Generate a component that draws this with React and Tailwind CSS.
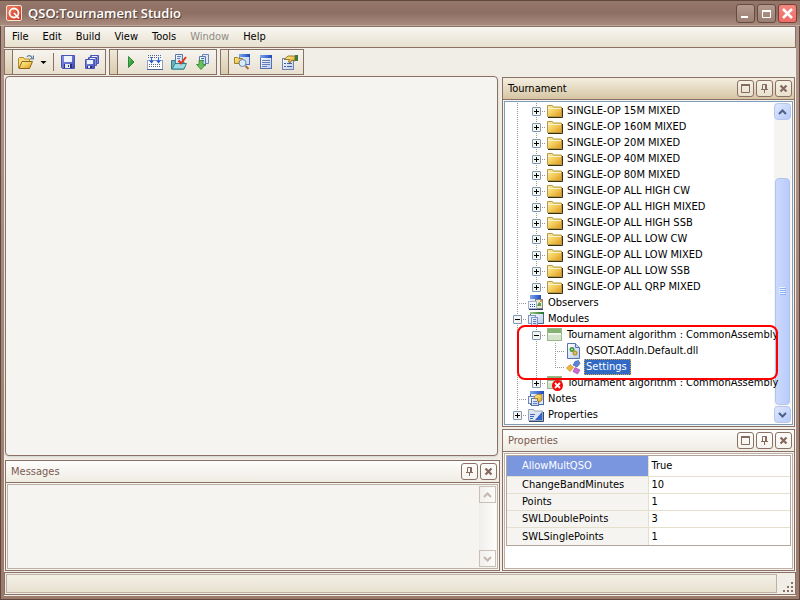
import React from "react";
import clsx from "clsx";

const folders = [
  "SINGLE-OP 15M MIXED",
  "SINGLE-OP 160M MIXED",
  "SINGLE-OP 20M MIXED",
  "SINGLE-OP 40M MIXED",
  "SINGLE-OP 80M MIXED",
  "SINGLE-OP ALL HIGH CW",
  "SINGLE-OP ALL HIGH MIXED",
  "SINGLE-OP ALL HIGH SSB",
  "SINGLE-OP ALL LOW CW",
  "SINGLE-OP ALL LOW MIXED",
  "SINGLE-OP ALL LOW SSB",
  "SINGLE-OP ALL QRP MIXED",
];

const properties = [
  { name: "AllowMultQSO", value: "True" },
  { name: "ChangeBandMinutes", value: "10" },
  { name: "Points", value: "1" },
  { name: "SWLDoublePoints", value: "3" },
  { name: "SWLSinglePoints", value: "1" },
];

const menus = ["File", "Edit", "Build", "View", "Tools", "Window", "Help"];

/* shared gradients for all small icons */
const IconDefs = () => (
  <svg className="absolute size-0" aria-hidden="true">
    <defs>
      <linearGradient id="gold" x1="0" y1="0" x2="1" y2="1">
        <stop offset="0" stopColor="#fdf0a8" />
        <stop offset="0.5" stopColor="#f3cc5c" />
        <stop offset="1" stopColor="#dc9818" />
      </linearGradient>
      <linearGradient id="disk" x1="0" y1="0" x2="1" y2="1">
        <stop offset="0" stopColor="#8c98ea" />
        <stop offset="1" stopColor="#3f49b8" />
      </linearGradient>
      <linearGradient id="blueBar" x1="0" y1="0" x2="1" y2="0">
        <stop offset="0" stopColor="#7ea6ee" />
        <stop offset="1" stopColor="#1d49b8" />
      </linearGradient>
      <linearGradient id="greenBar" x1="0" y1="0" x2="1" y2="0">
        <stop offset="0" stopColor="#9ccf8c" />
        <stop offset="1" stopColor="#1f6f28" />
      </linearGradient>
      <linearGradient id="paper" x1="0" y1="0" x2="1" y2="1">
        <stop offset="0" stopColor="#ffffff" />
        <stop offset="1" stopColor="#b9cbea" />
      </linearGradient>
      <linearGradient id="logo" x1="0" y1="0" x2="1" y2="1">
        <stop offset="0" stopColor="#f08060" />
        <stop offset="1" stopColor="#c8321c" />
      </linearGradient>
      <linearGradient id="green" x1="0" y1="0" x2="1" y2="1">
        <stop offset="0" stopColor="#6fd06a" />
        <stop offset="1" stopColor="#0c7a1a" />
      </linearGradient>
    </defs>
  </svg>
);

const Icon = ({ children }) => (
  <svg viewBox="0 0 16 16" className="size-4 shrink-0" aria-hidden="true">
    {children}
  </svg>
);

const OpenIcon = () => (
  <Icon>
    <path d="M.5 14V4.500l1-1h4l1 1.500h5V8" fill="#f7dc7c" stroke="#b3892a" />
    <path d="M1 14.500 4 7.500h10.500l-3 7z" fill="url(#gold)" stroke="#8c6718" />
    <path d="M9 3c1-2 4-2 5 1M15.400 1.500v3.300h-3.300" fill="none" stroke="#5f7f9f" strokeWidth="1.2" />
  </Icon>
);

const SaveIcon = () => (
  <Icon>
    <path d="M1.500 1.500h13v13h-12l-1-1z" fill="url(#disk)" stroke="#4a54b4" />
    <rect x="4" y="2" width="8" height="6" fill="#eef2fd" />
    <rect x="4" y="10" width="8" height="4" fill="#27306e" />
    <rect x="5" y="10" width="5" height="4" fill="#e4e9f8" />
    <rect x="8" y="11" width="1" height="2" fill="#2b3580" />
  </Icon>
);

const SaveAllIcon = () => (
  <Icon>
    <path d="M6.500 1.500h8v8h-8z" fill="#8390dc" stroke="#4a54b4" />
    <rect x="8" y="2" width="5" height="1" fill="#eef2fd" />
    <path d="M4.500 3.500h8v8h-8z" fill="#8390dc" stroke="#4a54b4" />
    <rect x="6" y="4" width="5" height="1" fill="#eef2fd" />
    <path d="M1.500 5.500h9v9h-9z" fill="url(#disk)" stroke="#4a54b4" />
    <rect x="3" y="6" width="6" height="4" fill="#eef2fd" />
    <rect x="3" y="12" width="5" height="2" fill="#27306e" />
    <rect x="4" y="12" width="2" height="2" fill="#e4e9f8" />
  </Icon>
);

const RunIcon = () => (
  <Icon>
    <path d="M5.500 2.500 11 8l-5.500 5.500z" fill="url(#green)" stroke="#15741c" strokeWidth="0.8" />
  </Icon>
);

const BuildIcon = () => (
  <Icon>
    <rect x="0" y="0" width="16" height="7" fill="#f3f3f3" />
    <path d="M1 1.500h14M1 3.500h14" stroke="#5a6478" strokeDasharray="1 1" />
    <rect x="0.500" y="6.500" width="15" height="9" fill="#ffffff" stroke="#8fa2c8" />
    <path d="M2 10.500h12M2 12.500h12" stroke="#5a6478" strokeDasharray="1 1" />
    <path d="M0 15.500h16" stroke="#4e6492" />
    <path d="M4.500 3v4M11.500 3v4" stroke="#3a72e8" />
    <path d="M2 6.500h5L4.500 9.500zM9 6.500h5l-2.500 3z" fill="#2456d0" />
  </Icon>
);

const CheckIcon = () => (
  <Icon>
    <path d="M0.500 15V6.500h4L6 8h7v7z" fill="#64b3bd" stroke="#2f7f8c" />
    <path d="M4.500.500h7v9h-7z" fill="url(#paper)" stroke="#5b76a8" />
    <path d="M6 2.500h4M6 4.500h3" stroke="#5b82c8" />
    <path d="m1 15 3-5.500h11.500L13 15z" fill="#9edbe0" stroke="#2f7f8c" />
    <path d="m7.500 6.500 2.500 3 5-6.500" fill="none" stroke="#e0341c" strokeWidth="2" />
  </Icon>
);

const ExportIcon = () => (
  <Icon>
    <path d="M7.500.500h6v9h-6z" fill="#dfe8f8" stroke="#6d86b6" />
    <path d="M4.500 2.500h6v9h-6z" fill="url(#paper)" stroke="#5b76a8" />
    <path d="M6 4.500h3M8 6.500h1" stroke="#3f66b8" />
    <path d="M4 6.500h4v4h2.500L6 15.500l-4.500-5H4z" fill="#6cc05c" stroke="#2d8229" strokeWidth="0.8" />
  </Icon>
);

const FindIcon = () => (
  <Icon>
    <rect x="5.500" y=".500" width="10" height="10" fill="#cfe0fb" stroke="#4a74cc" />
    <rect x="5" y="0" width="11" height="3" fill="url(#blueBar)" />
    <path d="M.500 9.500v-6h3l1 1h4v5z" fill="url(#gold)" stroke="#a8801c" />
    <circle cx="8.500" cy="9" r="3.500" fill="#d9ecfb" stroke="#6c86a6" />
    <path d="m11.500 12 3 3" stroke="#a86b3a" strokeWidth="2" />
  </Icon>
);

const ListIcon = () => (
  <Icon>
    <rect x="2.500" y="1.500" width="11" height="13" fill="url(#paper)" stroke="#5470b0" />
    <rect x="2" y="1" width="12" height="3" fill="url(#blueBar)" />
    <path d="M4 6.500h8M4 8.500h8M4 10.500h8M4 12.500h5" stroke="#6680b4" />
  </Icon>
);

const PropsIcon = () => (
  <Icon>
    <rect x=".500" y="4.500" width="11" height="11" fill="url(#paper)" stroke="#6c86b0" />
    <path d="M2 9.500h2M5 9.500h5M2 12.500h2M5 12.500h5" stroke="#44609c" />
    <path d="M2 5.500 6 2h7v5l-3-1-2 3-1.500-1 1-2.500z" fill="url(#gold)" stroke="#7d5b12" strokeWidth="0.8" />
    <rect x="13" y="1" width="3" height="6" fill="#3d7a3c" />
  </Icon>
);

const FolderIcon = () => (
  <Icon>
    <path d="M1 14.500h14.500V5" fill="none" stroke="#3a2c08" />
    <path d="M.500 13.500v-11h5l1 1.500h8v9.500z" fill="url(#gold)" stroke="#b9994c" />
    <path d="M1 5.500h13" stroke="#fdf4c4" />
  </Icon>
);

const ObserversIcon = () => (
  <Icon>
    <rect x="2" y="0" width="11" height="10" fill="#dfe9fb" />
    <rect x="2" y="0" width="11" height="4" fill="url(#blueBar)" />
    <rect x="7.500" y="4.500" width="7" height="9" fill="#f1e6c8" stroke="#7a8494" />
    <path d="m9 11 2-4 2 1.500V11z" fill="#4fa04a" />
    <rect x="12" y="5" width="2" height="2" fill="#e39b2f" />
    <rect x=".500" y="6.500" width="8" height="7" fill="#f4f7fd" stroke="#a4b2cc" />
    <path d="M2 9.500h6M2 11.500h6" stroke="#2a4fa8" strokeDasharray="1 1" />
    <path d="M1 14.500h14" stroke="#2a3c66" />
  </Icon>
);

const ModulesIcon = () => (
  <Icon>
    <rect x="2.500" y="1.500" width="13" height="11" fill="url(#paper)" stroke="#4e6a80" />
    <rect x="2" y="1" width="14" height="2" fill="url(#greenBar)" />
    <rect x=".500" y="4.500" width="7" height="8" fill="#eaf0fb" stroke="#7f96c2" />
    <rect x="3.500" y="6.500" width="6" height="8" fill="url(#paper)" stroke="#7f96c2" />
    <path d="M5 8.500h3M5 10.500h3M5 12.500h3" stroke="#5b82c8" />
  </Icon>
);

const AlgorithmIcon = ({ failed }) => (
  <Icon>
    <rect x=".500" y="1.500" width="14" height="12" fill="#eef5e8" stroke="#9ab68c" />
    <rect x="1" y="2" width="13" height="4" fill="#86b276" />
    <rect x="1" y="8" width="13" height="5" fill="#d3e4cb" />
    {failed && (
      <g>
        <circle cx="10.500" cy="10.500" r="5.500" fill="#f80808" />
        <path d="m8 8 5 5M13 8l-5 5" stroke="#ffffff" strokeWidth="1.8" />
      </g>
    )}
  </Icon>
);

const DllIcon = () => (
  <Icon>
    <path d="M1.500.500h8l4 4v11h-12z" fill="url(#paper)" stroke="#5873aa" />
    <path d="M9.500.500v4h4" fill="#c6d8f4" stroke="#5873aa" />
    <circle cx="6" cy="6.500" r="2.500" fill="#3f9c3a" />
    <circle cx="6" cy="6.500" r=".8" fill="#e6f4e4" />
    <circle cx="9" cy="10" r="2.500" fill="#b9962c" />
    <circle cx="9" cy="10" r=".8" fill="#fbf3d6" />
  </Icon>
);

const SettingsIcon = () => (
  <Icon>
    <path d="m9 2.500 3.500-1 1.500 3-3 3.500-4-2z" fill="#5f88d8" stroke="#2d4f9e" strokeWidth="0.6" />
    <path d="m4 5.500 3.500 3L4 12.500.500 9z" fill="#f0b63a" stroke="#b07d18" strokeWidth="0.6" />
    <path d="m9 8.500 5 2.500-2.500 4-4.500-2.500z" fill="#cc6ad8" stroke="#93419e" strokeWidth="0.6" />
  </Icon>
);

const NotesIcon = () => (
  <Icon>
    <rect x="2.500" y=".500" width="13" height="13" fill="#dfe9fb" stroke="#4a68a8" />
    <rect x="2" y="0" width="14" height="3" fill="url(#blueBar)" />
    <rect x=".500" y="5.500" width="7" height="7" fill="#eaf0fb" stroke="#6d86b6" />
    <rect x="3.500" y="7.500" width="7" height="7" fill="url(#paper)" stroke="#5873aa" />
    <path d="M5 10.500h4M5 12.500h4" stroke="#5b82c8" />
    <path d="m6 6 3-2.500h5V9l-2.500 2-2-1V7.500L7 8z" fill="url(#gold)" stroke="#8a6414" strokeWidth="0.7" />
  </Icon>
);

const PropFolderIcon = () => (
  <Icon>
    <path d="M.500 13.500v-11h5l1 1.500h8v9.500z" fill="#dfe5ee" stroke="#9aa6b8" />
    <path d="M2 7.500h5M2 9.500h4M2 11.500h3" stroke="#3a68c8" />
    <path d="M14 5v8H7z" fill="#3163cc" />
    <path d="M1 14.500h14.500V5" fill="none" stroke="#33466e" />
  </Icon>
);

/* one 19x16 cell of the tree gutter */
const Gutter = ({ up, down, across, box }) => (
  <svg viewBox="0 0 19 16" className="h-4 w-[19px] shrink-0" aria-hidden="true">
    {up && <path d="M9.500 0v8" stroke="#9d998f" strokeDasharray="1 1" />}
    {down && <path d="M9.500 8v8" stroke="#9d998f" strokeDasharray="1 1" />}
    {across && <path d="M9 8.500h10" stroke="#9d998f" strokeDasharray="1 1" />}
    {box && (
      <g>
        <rect x="5.500" y="4.500" width="8" height="8" rx=".500" fill="#f6f4ef" stroke="#7b97b5" />
        <path d="M7 8.500h5" stroke="#000000" />
        {box === "plus" && <path d="M9.500 6v5" stroke="#000000" />}
      </g>
    )}
  </svg>
);

const line = { up: true, down: true };
const tee = { up: true, down: true, across: true };
const end = { up: true, across: true };

const TreeRow = ({ gutters, icon, label, selected }) => (
  <li className="flex h-4 items-center whitespace-nowrap">
    {gutters.map((g, i) => (
      <Gutter key={i} {...g} />
    ))}
    <span className="ml-px flex">{icon}</span>
    <span
      className={clsx(
        "ml-0.5 h-4 px-0.5 leading-4",
        selected && "bg-[#316ac5] pr-1 text-white outline-1 -outline-offset-1 outline-dotted outline-[#e0a040]"
      )}
    >
      {label}
    </span>
  </li>
);

const MaximizeGlyph = () => (
  <svg viewBox="0 0 9 9" className="size-[9px]" aria-hidden="true">
    <path d="M.500 1v7.500h8V1" fill="none" stroke="currentColor" />
    <path d="M0 1h9" stroke="currentColor" strokeWidth="2" />
  </svg>
);

const PinGlyph = () => (
  <svg viewBox="0 0 9 9" className="size-[9px]" aria-hidden="true">
    <path d="M2.500 5V.500h4V5M1 5.500h7M4.500 6v3M5.500 0v5" fill="none" stroke="currentColor" />
  </svg>
);

const CloseGlyph = () => (
  <svg viewBox="0 0 9 9" className="size-[9px]" aria-hidden="true">
    <path d="m1.500 1.500 6 6M7.500 1.500l-6 6" stroke="currentColor" strokeWidth="2.200" />
  </svg>
);

const PanelButton = ({ label, children }) => (
  <button
    aria-label={label}
    className="flex size-[17px] items-center justify-center rounded-[3px] border border-[#8b7065] bg-white/40 text-[#866a5e]"
  >
    {children}
  </button>
);

const Panel = ({ title, active, maximize, className, children }) => (
  <section className={clsx("flex flex-col border border-[#8b7065] bg-[#f6f4f0]", className)}>
    <header
      className={clsx(
        "flex h-[22px] shrink-0 items-center gap-0.5 border-b border-[#8b7065] bg-linear-to-b pr-0.5 pl-[5px]",
        active ? "from-[#f4efe2] to-[#d6c5a2] text-black" : "from-[#fdfdfc] to-[#efece3] text-[#7b5a50]"
      )}
    >
      <h2 className="flex-1 pt-0.5">{title}</h2>
      {maximize && (
        <PanelButton label="Maximize">
          <MaximizeGlyph />
        </PanelButton>
      )}
      <PanelButton label="Auto hide">
        <PinGlyph />
      </PanelButton>
      <PanelButton label="Close">
        <CloseGlyph />
      </PanelButton>
    </header>
    <div className="flex min-h-0 flex-1 p-px">{children}</div>
  </section>
);

const Chevron = ({ down }) => (
  <svg viewBox="0 0 9 6" className="h-1.5 w-[9px]" aria-hidden="true">
    <path
      d={down ? "m1 1 3.500 3.500L8 1" : "m1 5 3.500-3.500L8 5"}
      fill="none"
      stroke="currentColor"
      strokeWidth="2"
    />
  </svg>
);

const ToolButton = ({ label, children }) => (
  <button aria-label={label} className="flex h-6 w-6 items-center justify-center">
    {children}
  </button>
);

const ToolGroup = ({ children }) => (
  <div className="flex h-[26px] border border-[#8b7065] bg-linear-to-b from-[#f6f4ef] to-[#e9e1d0]">
    <div className="w-2 border-r border-[#8b7065] bg-linear-to-b from-[#efe9da] to-[#d9cbae]" />
    <div className="flex items-center px-px">{children}</div>
  </div>
);

const WindowButton = ({ label, close, children }) => (
  <button
    aria-label={label}
    className={clsx(
      "flex size-[19px] items-center justify-center rounded-[3px] border text-white",
      close
        ? "border-[#7c4038] bg-linear-to-b from-[#f08880] to-[#f06c66]"
        : "border-[#644c42] bg-linear-to-b from-[#b39a8d] to-[#9a7f72]"
    )}
  >
    {children}
  </button>
);

const TitleBar = () => (
  <header className="flex h-[26px] shrink-0 items-center border-t border-b border-t-[#5f473d] border-b-[#c0a79b] bg-linear-to-b from-[#947769] via-[#8d7063] to-[#a88b7d] pr-[3px] pl-1.5">
    <svg viewBox="0 0 16 16" className="size-4" aria-hidden="true">
      <rect x=".500" y=".500" width="15" height="15" rx="1.500" fill="url(#logo)" stroke="#fbe3da" />
      <circle cx="8" cy="8" r="4.500" fill="none" stroke="#ffffff" strokeWidth="1.8" />
      <path d="m8 8 5 5.500" stroke="#ffffff" strokeWidth="1.8" />
    </svg>
    <h1 className="flex-1 pl-1.5 font-['Open_Sans','Noto_Sans',sans-serif] text-[13px] leading-4 font-semibold text-white [text-shadow:1px_1px_0_#5a4238]">
      QSO:Tournament Studio
    </h1>
    <div className="flex gap-0.5">
      <WindowButton label="Minimize">
        <svg viewBox="0 0 11 11" className="size-[11px]" aria-hidden="true">
          <path d="M1 9h7" stroke="currentColor" strokeWidth="2" />
        </svg>
      </WindowButton>
      <WindowButton label="Maximize">
        <svg viewBox="0 0 11 11" className="size-[11px]" aria-hidden="true">
          <path d="M1.500 2v7.500h8V2" fill="none" stroke="currentColor" />
          <path d="M1 3h9" stroke="currentColor" strokeWidth="2" />
        </svg>
      </WindowButton>
      <WindowButton label="Close" close>
        <svg viewBox="0 0 11 11" className="size-[11px]" aria-hidden="true">
          <path d="m1 1 9 9M10 1l-9 9" stroke="currentColor" strokeWidth="2.500" />
        </svg>
      </WindowButton>
    </div>
  </header>
);

const ToolBar = () => (
  <div className="flex h-7 shrink-0 items-start gap-[3px] pt-px">
    <ToolGroup>
      <button aria-label="Open" className="flex h-6 items-center gap-1.5 pr-1.5 pl-1">
        <OpenIcon />
        <svg viewBox="0 0 7 3" className="h-[3px] w-[7px]" aria-hidden="true">
          <path d="M.500 0h6L3.500 3z" fill="#000000" />
        </svg>
      </button>
      <span className="mr-0.5 h-[18px] w-px bg-[#8b7065]" />
      <ToolButton label="Save">
        <SaveIcon />
      </ToolButton>
      <ToolButton label="Save all">
        <SaveAllIcon />
      </ToolButton>
    </ToolGroup>
    <ToolGroup>
      <ToolButton label="Run">
        <RunIcon />
      </ToolButton>
      <ToolButton label="Build">
        <BuildIcon />
      </ToolButton>
      <ToolButton label="Check">
        <CheckIcon />
      </ToolButton>
      <ToolButton label="Export">
        <ExportIcon />
      </ToolButton>
    </ToolGroup>
    <ToolGroup>
      <ToolButton label="Explorer">
        <FindIcon />
      </ToolButton>
      <ToolButton label="Messages">
        <ListIcon />
      </ToolButton>
      <ToolButton label="Properties">
        <PropsIcon />
      </ToolButton>
    </ToolGroup>
  </div>
);

const TreeScrollBar = () => (
  <div className="flex w-[17px] shrink-0 flex-col gap-px bg-[#f5f4f0]">
    <button
      aria-label="Scroll up"
      className="flex h-[17px] items-center justify-center rounded-sm border border-[#b6c6ee] bg-linear-to-br from-[#dfe8fe] to-[#b7cafa] text-[#4d6185]"
    >
      <Chevron />
    </button>
    <div className="flex min-h-0 flex-1 flex-col justify-end">
      <div className="mx-px flex h-4/5 items-center justify-center rounded-sm border border-[#b0c3f2] bg-linear-to-r from-[#cbdafd] to-[#b9cbf9]">
        <svg viewBox="0 0 7 8" className="h-2 w-[7px]" aria-hidden="true">
          <path d="M0 .500h6M0 2.500h6M0 4.500h6M0 6.500h6" stroke="#eef4fe" />
          <path d="M1 1.500h6M1 3.500h6M1 5.500h6M1 7.500h6" stroke="#8cb0f8" />
        </svg>
      </div>
    </div>
    <button
      aria-label="Scroll down"
      className="flex h-[17px] items-center justify-center rounded-sm border border-[#b6c6ee] bg-linear-to-br from-[#dfe8fe] to-[#b7cafa] text-[#4d6185]"
    >
      <Chevron down />
    </button>
  </div>
);

const TournamentTree = () => (
  <div className="flex min-w-0 flex-1 border border-[#7f9db9] bg-white p-px">
    <div className="z-10 min-w-0 flex-1 pl-0.5">
      <ul>
        {folders.map((name, i) => (
          <TreeRow
            key={name}
            gutters={[line, { ...(i === folders.length - 1 ? end : tee), box: "plus" }]}
            icon={<FolderIcon />}
            label={name}
          />
        ))}
        <TreeRow gutters={[tee]} icon={<ObserversIcon />} label="Observers" />
        <TreeRow gutters={[{ ...tee, box: "minus" }]} icon={<ModulesIcon />} label="Modules" />
      </ul>
      {/* highlighted branch */}
      <div className="relative">
        <ul>
          <TreeRow
            gutters={[line, { ...tee, box: "minus" }]}
            icon={<AlgorithmIcon />}
            label="Tournament algorithm : CommonAssembly"
          />
          <TreeRow gutters={[line, line, tee]} icon={<DllIcon />} label="QSOT.AddIn.Default.dll" />
          <TreeRow gutters={[line, line, end]} icon={<SettingsIcon />} label="Settings" selected />
        </ul>
        <div className="pointer-events-none absolute -top-0.5 -right-1 -bottom-[5px] left-[9px] z-10 rounded-lg border-2 border-[#ff0000]" />
      </div>
      <ul>
        <TreeRow
          gutters={[line, { ...end, box: "plus" }]}
          icon={<AlgorithmIcon failed />}
          label="Tournament algorithm : CommonAssembly"
        />
        <TreeRow gutters={[tee]} icon={<NotesIcon />} label="Notes" />
        <TreeRow gutters={[{ ...end, box: "plus" }]} icon={<PropFolderIcon />} label="Properties" />
      </ul>
    </div>
    <TreeScrollBar />
  </div>
);

const PropertyGrid = () => (
  <div className="min-w-0 flex-1 border border-[#bfb0a6] bg-white p-px">
    <div className="border border-[#b3a59b]">
      <table className="w-full table-fixed border-separate border-spacing-0 text-left">
        <tbody>
          {properties.map((p, i) => (
            <tr key={p.name} className="group">
              <th
                scope="row"
                className={clsx(
                  "w-1/2 border-r border-b border-[#e5dfce] p-0 pl-[15px] font-normal group-last:border-b-0",
                  i === 0 ? "h-5 bg-[#7a96df] leading-5 text-white" : "h-[17px] bg-[#f6f4f0] leading-4"
                )}
              >
                {p.name}
              </th>
              <td className="border-b border-[#e5dfce] p-0 pl-[3px] leading-4 group-last:border-b-0">
                {p.value}
              </td>
            </tr>
          ))}
        </tbody>
      </table>
    </div>
  </div>
);

const MessagesPane = () => (
  <div className="flex min-w-0 flex-1 border border-[#bfb0a6] p-px">
    <textarea readOnly aria-label="Messages" className="min-w-0 flex-1 resize-none outline-none" />
    <div className="flex w-[17px] shrink-0 flex-col justify-between bg-linear-to-r from-[#f0eeea] to-[#fdfdfc]">
      <button
        aria-label="Scroll up"
        disabled
        className="flex h-[17px] items-center justify-center border border-[#c9bfb7] text-[#c3b8b0]"
      >
        <Chevron />
      </button>
      <button
        aria-label="Scroll down"
        disabled
        className="flex h-[17px] items-center justify-center border border-[#c9bfb7] text-[#c3b8b0]"
      >
        <Chevron down />
      </button>
    </div>
  </div>
);

export default function App() {
  return (
    <div className="flex h-screen flex-col bg-[#8d7164] font-['DejaVu_Sans_Condensed','DejaVu_Sans',sans-serif] text-[11px] text-black">
      <IconDefs />
      <TitleBar />
      <div className="flex min-h-0 flex-1 border-x border-b border-[#5f473d] bg-linear-to-b from-[#b0958a] to-[#9a7b6c] px-[3px] pb-[3px]">
        <div className="flex min-w-0 flex-1 flex-col bg-[#f1eee7]">
          <nav className="flex h-[22px] shrink-0 items-center border border-[#8b7065] bg-linear-to-b from-[#f8f6f2] to-[#e8e1cf]">
            {menus.map((name) => (
              <button key={name} disabled={name === "Window"} className="px-[7px] disabled:text-[#8f8b84]">
                {name}
              </button>
            ))}
          </nav>
          <ToolBar />
          <main className="flex min-h-0 flex-1 gap-0.5 px-px pb-px">
            <div className="flex min-w-0 flex-1 flex-col gap-1">
              <div className="mr-0.5 flex-1 rounded-sm border border-[#8b7065] bg-[#f6f4f1] shadow-sm" />
              <Panel title="Messages" className="h-[111px]">
                <MessagesPane />
              </Panel>
            </div>
            <aside className="flex w-[293px] flex-col gap-0.5 pt-px">
              <Panel title="Tournament" active maximize className="min-h-0 flex-1">
                <TournamentTree />
              </Panel>
              <Panel title="Properties" maximize className="h-[142px]">
                <PropertyGrid />
              </Panel>
            </aside>
          </main>
          <footer className="mb-px flex h-[23px] shrink-0 items-stretch border border-[#8b7065] p-px">
            <div className="flex-1 border border-[#bfb0a6] bg-linear-to-b from-[#f3f0e6] to-[#e8e1d1]" />
            <div className="flex w-[17px] items-end justify-end">
              <svg viewBox="0 0 11 11" className="size-[11px]" aria-hidden="true">
                <path
                  d="M8 0h2v2H8zM8 4h2v2H8zM8 8h2v2H8zM4 4h2v2H4zM4 8h2v2H4zM0 8h2v2H0z"
                  fill="#8b7065"
                />
              </svg>
            </div>
          </footer>
        </div>
      </div>
    </div>
  );
}
